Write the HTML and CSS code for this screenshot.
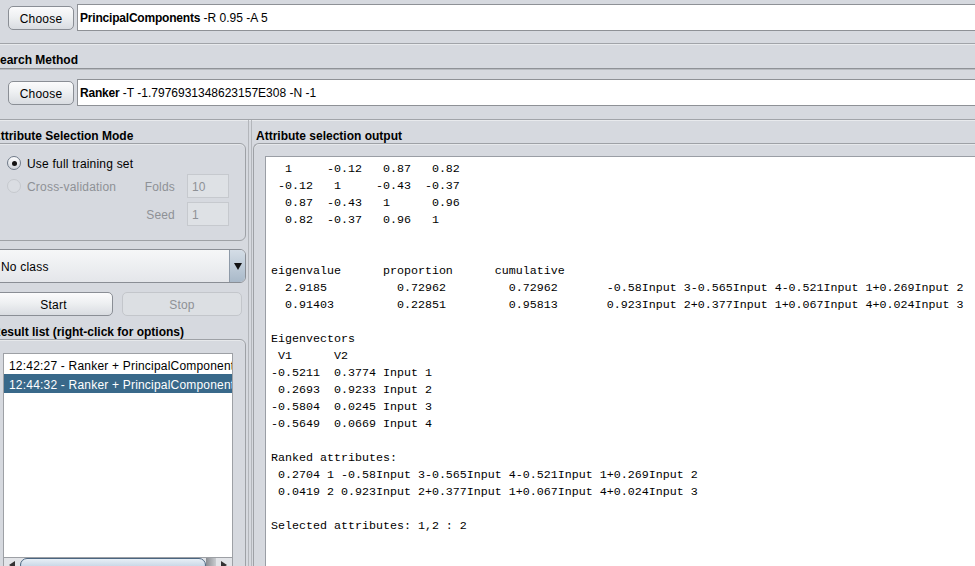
FILE: index.html
```html
<!DOCTYPE html>
<html>
<head>
<meta charset="utf-8">
<link rel="stylesheet" href="styles.css">
</head>
<body>
<div class="app">
  <section class="evaluator">
    <div class="chooser">
      <button class="btn choose">Choose</button>
      <div class="field"><b>PrincipalComponents</b> -R 0.95 -A 5</div>
    </div>
  </section>
  <section class="search">
    <div class="title">Search Method</div>
    <div class="tpanel">
      <div class="chooser">
        <button class="btn choose">Choose</button>
        <div class="field"><b>Ranker</b> -T -1.7976931348623157E308 -N -1</div>
      </div>
    </div>
  </section>
  <div class="main">
    <div class="left">
      <div class="title">Attribute Selection Mode</div>
      <div class="box mode">
        <div class="mrow r1">
          <span class="radio on"><span class="dot"></span></span>
          <span class="rlabel">Use full training set</span>
        </div>
        <div class="mrow r2">
          <span class="radio off"></span>
          <span class="rlabel dis">Cross-validation</span>
          <span class="spacer"></span>
          <span class="flabel dis">Folds</span>
          <span class="dfield">10</span>
        </div>
        <div class="mrow r3">
          <span class="spacer"></span>
          <span class="flabel dis">Seed</span>
          <span class="dfield">1</span>
        </div>
      </div>
      <div class="combo">
        <span class="ctext">No class</span>
        <span class="cbtn"><span class="tri-down"></span></span>
      </div>
      <div class="actions">
        <button class="btn start">Start</button>
        <button class="btn stop" disabled>Stop</button>
      </div>
      <div class="title">Result list (right-click for options)</div>
      <div class="box results">
        <div class="list">
          <div class="item">12:42:27 - Ranker + PrincipalComponents</div>
          <div class="item sel">12:44:32 - Ranker + PrincipalComponents</div>
        </div>
        <div class="hscroll">
          <span class="sbtn"><span class="tri-left"></span></span>
          <span class="thumb"></span>
          <span class="sshade"></span>
          <span class="sbtn"><span class="tri-right"></span></span>
        </div>
      </div>
    </div>
    <div class="divider"></div>
    <div class="right">
      <div class="title">Attribute selection output</div>
      <div class="box outbox">
        <div class="scroll">
<pre class="output">  1     -0.12   0.87   0.82
 -0.12   1     -0.43  -0.37
  0.87  -0.43   1      0.96
  0.82  -0.37   0.96   1


eigenvalue      proportion      cumulative
  2.9185          0.72962         0.72962       -0.58Input 3-0.565Input 4-0.521Input 1+0.269Input 2
  0.91403         0.22851         0.95813       0.923Input 2+0.377Input 1+0.067Input 4+0.024Input 3

Eigenvectors
 V1      V2
-0.5211  0.3774 Input 1
 0.2693  0.9233 Input 2
-0.5804  0.0245 Input 3
-0.5649  0.0669 Input 4

Ranked attributes:
 0.2704 1 -0.58Input 3-0.565Input 4-0.521Input 1+0.269Input 2
 0.0419 2 0.923Input 2+0.377Input 1+0.067Input 4+0.024Input 3

Selected attributes: 1,2 : 2</pre>
        </div>
      </div>
    </div>
  </div>
</div>
</body>
</html>
```

FILE: styles.css
```css
* { box-sizing: border-box; }
html, body { margin: 0; padding: 0; }
body {
  background: #d6d9df;
  font-family: "Liberation Sans", Arial, sans-serif;
  font-size: 12px;
  color: #000;
  width: 975px;
  height: 566px;
  overflow: hidden;
}
.app {
  margin-left: -10px;
  width: 1000px;
  height: 600px;
  display: flex;
  flex-direction: column;
}
.title {
  font-weight: bold;
  height: 15px;
  line-height: 15px;
  padding-left: 2px;
  white-space: nowrap;
  flex: none;
}

/* top chooser panels */
.evaluator {
  flex: none;
  padding: 4px 0 12px 18px;
  border-bottom: 1px solid #a1a4a9;
  box-shadow: 0 1px 0 #e8eaed;
}
.search { flex: none; }
.search .title { margin-top: 9px; }
.tpanel {
  border-top: 1px solid #8f9297;
  border-bottom: 1px solid #a1a4a9;
  box-shadow: inset 0 1px 0 #b9bcc1, 0 1px 0 #e8eaed;
  padding: 10px 0 13px 18px;
}
.chooser {
  display: flex;
  align-items: center;
  height: 27px;
}
.btn {
  font-family: "Liberation Sans", Arial, sans-serif;
  font-size: 12px;
  color: #000;
  height: 24px;
  border: 1px solid #8a8e95;
  border-radius: 5px;
  background: linear-gradient(#fbfbfc 0%, #eef0f2 45%, #d9dce1 100%);
  padding: 2px 0 0 0;
  letter-spacing: 0.2px;
}
.btn.choose { width: 66px; flex: none; }
.field {
  flex: 1;
  margin-left: 3px;
  height: 27px;
  background: #fff;
  border: 1px solid #8e9196;
  line-height: 27px;
  padding-left: 2px;
  white-space: nowrap;
  overflow: hidden;
}
.field b { letter-spacing: -0.2px; }

/* main area */
.main {
  flex: 1;
  display: flex;
  min-height: 0;
}
.left {
  width: 256px;
  flex: none;
  display: flex;
  flex-direction: column;
  letter-spacing: 0.2px;
}
.left > .title { letter-spacing: 0; }
.left > .title, .right > .title { margin-top: 8px; line-height: 17px; }
.box {
  border: 1px solid #9ea1a6;
  border-radius: 6px;
  box-shadow: inset 0 1px 0 #e6e8eb;
}
.mode {
  height: 98px;
  flex: none;
  padding: 8px 16px 0 16px;
}
.mrow {
  display: flex;
  align-items: center;
}
.r1 { height: 22px; }
.r2 { height: 24px; }
.r3 { height: 24px; margin-top: 4px; }
.radio {
  width: 14px;
  height: 14px;
  border-radius: 50%;
  flex: none;
  display: flex;
  align-items: center;
  justify-content: center;
}
.radio.on {
  border: 1px solid #6f7a88;
  background: linear-gradient(#fdfdfe, #cdd2d9);
}
.radio.on .dot {
  width: 5px;
  height: 5px;
  border-radius: 50%;
  background: #111;
}
.radio.off {
  border: 1px solid #c6c9ce;
  background: #dadde2;
}
.rlabel { margin-left: 6px; padding-top: 2px; }
.dis { color: #8e9196; }
.spacer { flex: 1; }
.flabel { margin-right: 12px; padding-top: 2px; }
.dfield {
  width: 42px;
  height: 24px;
  border: 1px solid #c6c9ce;
  background: #dee1e5;
  color: #8e9196;
  line-height: 24px;
  padding-left: 4px;
}
.combo {
  flex: none;
  margin-top: 8px;
  height: 34px;
  display: flex;
  border: 1px solid #8a8e95;
  border-radius: 6px;
  background: linear-gradient(#f6f7f8, #e4e6ea);
  overflow: hidden;
}
.ctext {
  flex: 1;
  line-height: 35px;
  padding-left: 10px;
}
.cbtn {
  width: 16px;
  border-left: 1px solid #8e9aa8;
  background: linear-gradient(#d4dde6, #a9b9c9);
  display: flex;
  align-items: center;
  justify-content: center;
}
.tri-down {
  width: 0; height: 0;
  border-left: 4px solid transparent;
  border-right: 4px solid transparent;
  border-top: 7px solid #111;
}
.actions {
  flex: none;
  margin-top: 9px;
  display: flex;
  gap: 9px;
  padding-left: 4px;
}
.btn.start { width: 119px; }
.btn.stop {
  width: 120px;
  color: #8e9196;
  border-color: #c3c6cb;
  background: #dcdfe3;
}
.results {
  flex: 1;
  padding: 13px 12px 0 12px;
}
.list {
  height: 204px;
  background: #fff;
  border: 1px solid #9da0a5;
  border-bottom: none;
  padding-top: 1px;
  overflow: hidden;
  display: flex;
  flex-direction: column;
}
.item {
  height: 19px;
  line-height: 22px;
  padding-left: 5px;
  white-space: nowrap;
  overflow: hidden;
  flex: none;
}
.item.sel { background: #39698a; color: #fff; }
.hscroll {
  height: 16px;
  display: flex;
  border: 1px solid #9da0a5;
  background: #e2e4e8;
}
.sbtn {
  width: 16px;
  display: flex;
  align-items: center;
  justify-content: center;
}
.tri-left {
  width: 0; height: 0;
  border-top: 4px solid transparent;
  border-bottom: 4px solid transparent;
  border-right: 6px solid #333;
}
.tri-right {
  width: 0; height: 0;
  border-top: 4px solid transparent;
  border-bottom: 4px solid transparent;
  border-left: 6px solid #333;
}
.thumb {
  flex: 1;
  border: 1px solid #4a6580;
  border-radius: 8px;
  background: linear-gradient(#e8eff6, #b5c9dd);
}
.sshade {
  width: 10px;
  background: linear-gradient(90deg, #8a8d92, #c9ccd0);
}
.divider {
  width: 7px;
  flex: none;
  border-left: 2px solid transparent;
  display: flex;
}
.divider::before, .divider::after {
  content: "";
  width: 1px;
  background: #b3b6bb;
  margin-right: 2px;
}
.right {
  flex: 1;
  display: flex;
  flex-direction: column;
}
.right > .title { padding-left: 3px; }
.outbox {
  flex: 1;
  padding: 12px 0 0 11px;
  border-right: none;
}
.scroll {
  height: 100%;
  background: #fff;
  border: 1px solid #9a9ea5;
  padding: 4px 0 0 5px;
  overflow: hidden;
}
.output {
  margin: 0;
  font-family: "Liberation Mono", "Courier New", monospace;
  font-size: 11.667px;
  line-height: 17px;
  white-space: pre;
  color: #000;
}
```
